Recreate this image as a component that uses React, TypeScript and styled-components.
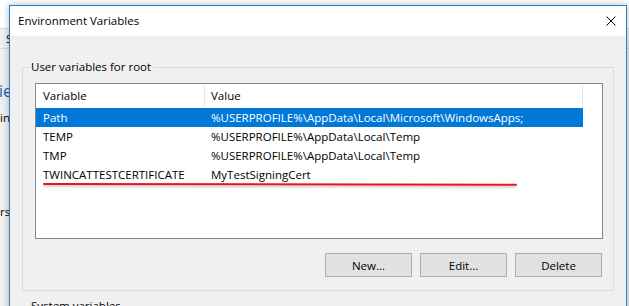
import React, { FC } from 'react';
import styled, { createGlobalStyle } from 'styled-components';

const GlobalStyle = createGlobalStyle`
  html, body {
    margin: 0;
    padding: 0;
    background: #ffffff;
  }
  body {
    font-family: 'Segoe UI', 'Open Sans', 'Liberation Sans', sans-serif;
    font-size: 11.5px;
    line-height: 16px;
    color: #000000;
  }
`;

const Desktop = styled.div`
  position: relative;
  width: 629px;
  height: 306px;
  overflow: hidden;
`;

// the settings window that sits behind the dialog
const BackWindow = styled.div`
  display: flex;
  flex-direction: column;
  height: 100%;
  background: #f0f0f0;
`;

const BackHeader = styled.div`
  flex-shrink: 0;
  height: 28px;
  background: #ffffff;
  border-bottom: 1px solid #dadada;
`;

const BackTabs = styled.div`
  flex-shrink: 0;
  height: 19px;
  border-bottom: 1px solid #dadada;
  display: flex;
  align-items: center;
  padding-left: 6px;
`;

const BackBody = styled.div`
  display: flex;
  flex-direction: column;
  align-items: flex-start;
`;

const Fragment = styled.div<{ $top: number; $size?: number; $blue?: boolean }>`
  white-space: nowrap;
  margin-top: ${(p) => p.$top}px;
  margin-left: ${(p) => (p.$blue ? -1 : 0)}px;
  font-size: ${(p) => p.$size ?? 11.5}px;
  line-height: ${(p) => (p.$size ? 22 : 16)}px;
  color: ${(p) => (p.$blue ? '#1a5ea8' : '#000000')};
`;

const Dialog = styled.div`
  position: absolute;
  left: 9px;
  top: 5px;
  width: 618px;
  box-sizing: border-box;
  border: 1px solid #1883d7;
  background: #f0f0f0;
  box-shadow: 0 0 7px rgba(0, 0, 0, 0.28);
`;

const TitleBar = styled.div`
  height: 30px;
  background: #ffffff;
  display: flex;
  align-items: center;
  justify-content: space-between;
  padding-left: 8px;
  padding-right: 10px;
`;

const CloseButton = styled.div`
  width: 10px;
  height: 10px;
  display: flex;
`;

const Body = styled.div`
  padding: 0 12px 40px 12px;
  display: flex;
  flex-direction: column;
`;

const GroupBox = styled.fieldset<{ $top: number }>`
  margin: ${(p) => p.$top}px 0 0 0;
  padding: 8px 10px 13px 12px;
  border: 1px solid #dcdcdc;
  min-width: 0;
`;

const GroupLabel = styled.legend`
  margin-left: -6px;
  padding: 0 2px;
  line-height: 16px;
`;

const ListBox = styled.div`
  width: 568px;
  height: 156px;
  box-sizing: border-box;
  border: 1px solid #828790;
  background: #ffffff;
`;

const HeaderRow = styled.div`
  display: flex;
  height: 24px;
`;

const HeaderCell = styled.div<{ $width: number; $pad: number }>`
  width: ${(p) => p.$width}px;
  padding-left: ${(p) => p.$pad}px;
  box-sizing: border-box;
  display: flex;
  align-items: center;
  border-right: 1px solid #e5e5e5;
  margin: 1px 0;
`;

const Row = styled.div<{ $selected?: boolean }>`
  display: flex;
  width: 547px;
  height: 19px;
  align-items: center;
  background: ${(p) => (p.$selected ? '#0078d7' : 'transparent')};
  color: ${(p) => (p.$selected ? '#ffffff' : '#000000')};
`;

const Cell = styled.div<{ $width: number; $pad: number }>`
  width: ${(p) => p.$width}px;
  padding-left: ${(p) => p.$pad}px;
  box-sizing: border-box;
  white-space: nowrap;
  overflow: hidden;
`;

const ButtonRow = styled.div`
  display: flex;
  justify-content: flex-end;
  gap: 8px;
  margin-top: 14px;
  width: 567px;
`;

const Button = styled.button`
  width: 87px;
  height: 24px;
  box-sizing: border-box;
  border: 1px solid #adadad;
  background: #e1e1e1;
  font-family: inherit;
  font-size: 11.5px;
  color: #000000;
  padding: 0;
`;

// hand-drawn red underline laid over the list
const Annotation = styled.div`
  position: absolute;
  left: 43px;
  top: 183px;
  width: 474px;
  height: 2px;
  border-radius: 1px;
  background: #e8141b;
  transform: rotate(0.1deg);
  transform-origin: left center;
  box-shadow: 0 2px 2px rgba(0, 0, 0, 0.2);
`;

const columns = [
  { width: 169, pad: 7 },
  { width: 378, pad: 6 },
];

const variables = [
  { name: 'Path', value: '%USERPROFILE%\\AppData\\Local\\Microsoft\\WindowsApps;', selected: true },
  { name: 'TEMP', value: '%USERPROFILE%\\AppData\\Local\\Temp' },
  { name: 'TMP', value: '%USERPROFILE%\\AppData\\Local\\Temp' },
  { name: 'TWINCATTESTCERTIFICATE', value: 'MyTestSigningCert' },
];

const App: FC = () => {
  return (
    <>
      <GlobalStyle />
      <Desktop>
        <BackWindow>
          <BackHeader />
          <BackTabs>S</BackTabs>
          <BackBody>
            <Fragment $top={31} $size={16} $blue>
              ie
            </Fragment>
            <Fragment $top={8}>in</Fragment>
            <Fragment $top={78}>rst</Fragment>
          </BackBody>
        </BackWindow>

        <Dialog>
          <TitleBar>
            <span>Environment Variables</span>
            <CloseButton>
              <svg width="10" height="10" viewBox="0 0 10 10">
                <path d="M0.5 0.5 L9.5 9.5 M9.5 0.5 L0.5 9.5" stroke="#000" strokeWidth="1" />
              </svg>
            </CloseButton>
          </TitleBar>
          <Body>
            <GroupBox $top={23}>
              <GroupLabel>User variables for root</GroupLabel>
              <ListBox>
                <HeaderRow>
                  <HeaderCell $width={columns[0].width} $pad={columns[0].pad}>
                    Variable
                  </HeaderCell>
                  <HeaderCell $width={columns[1].width} $pad={columns[1].pad}>
                    Value
                  </HeaderCell>
                </HeaderRow>
                {variables.map((v) => (
                  <Row key={v.name} $selected={v.selected}>
                    <Cell $width={columns[0].width} $pad={columns[0].pad}>
                      {v.name}
                    </Cell>
                    <Cell $width={columns[1].width} $pad={columns[1].pad}>
                      {v.value}
                    </Cell>
                  </Row>
                ))}
              </ListBox>
              <ButtonRow>
                <Button>New...</Button>
                <Button>Edit...</Button>
                <Button>Delete</Button>
              </ButtonRow>
            </GroupBox>
            <GroupBox $top={7}>
              <GroupLabel>System variables</GroupLabel>
            </GroupBox>
          </Body>
        </Dialog>

        <Annotation />
      </Desktop>
    </>
  );
};

export default App;
